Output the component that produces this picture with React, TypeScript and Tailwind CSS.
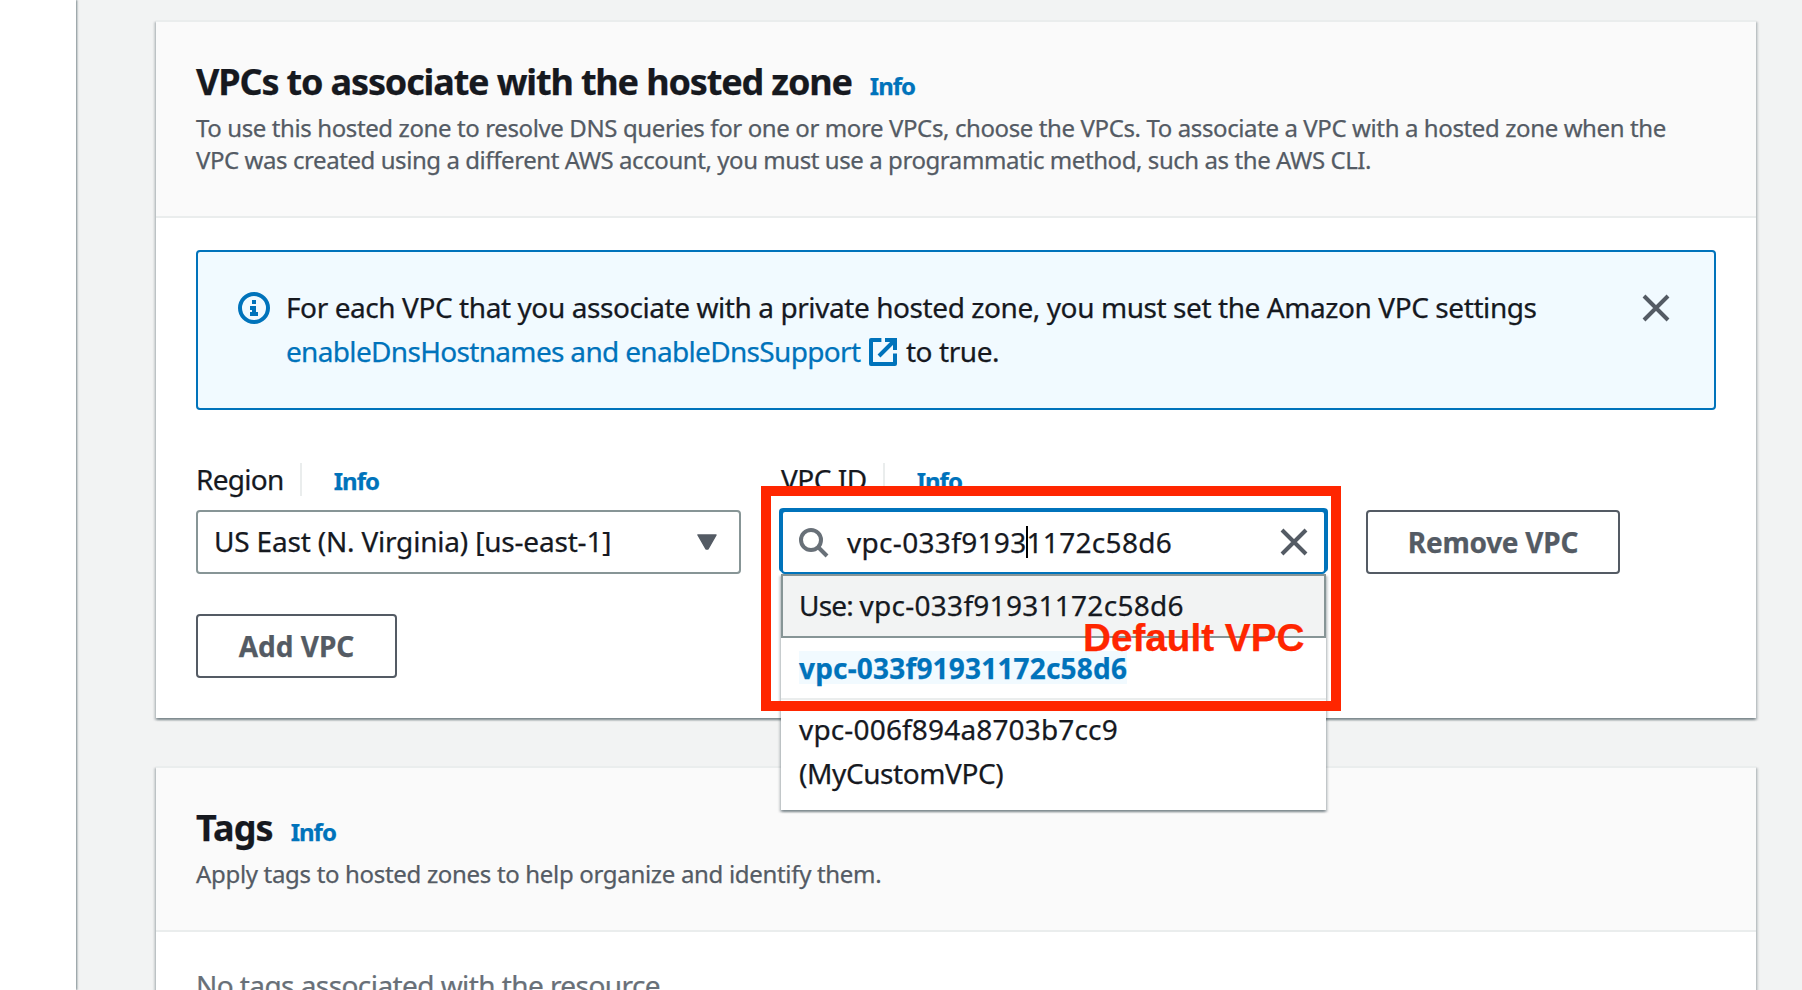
import type { ReactNode } from "react";

function CloseIcon() {
  return (
    <svg viewBox="0 0 32 32" className="block size-8 shrink-0" fill="none" stroke="#545b64" strokeWidth="4">
      <path d="M4 4l24 24M28 4L4 28" />
    </svg>
  );
}

function InfoIcon() {
  return (
    <svg viewBox="0 0 32 32" className="block size-8 shrink-0">
      <circle cx="16" cy="16" r="14" fill="none" stroke="#0073bb" strokeWidth="4" />
      <path d="M14 8h4v4h-4zM12 14h6v6h2v4h-8v-4h2v-2h-2z" fill="#0073bb" />
    </svg>
  );
}

function ExternalIcon() {
  return (
    <svg
      viewBox="0 0 16 16"
      className="mb-1.5 inline-block size-8 align-middle"
      fill="none"
      stroke="#0073bb"
      strokeWidth="2"
    >
      <path d="M14 8.8V14H2V2h5.2" strokeLinejoin="round" />
      <path d="M9 2h5v5M14 2l-8 8" />
    </svg>
  );
}

function SearchIcon() {
  return (
    <svg viewBox="0 0 32 32" className="block size-8 shrink-0" fill="none" stroke="#687078" strokeWidth="4">
      <circle cx="14" cy="14" r="10" />
      <path d="M21 21l9 9" />
    </svg>
  );
}

function InfoLink() {
  return <a className="text-2xl leading-8 font-bold tracking-[-1px] text-[#0073bb]">Info</a>;
}

function Card({ title, description, children }: { title: ReactNode; description: ReactNode; children: ReactNode }) {
  return (
    <section className="border-t-2 border-[#eaeded] bg-white shadow-[0_2px_2px_0_rgba(0,28,36,0.3),2px_2px_2px_0_rgba(0,28,36,0.15),-2px_2px_2px_0_rgba(0,28,36,0.15)]">
      <header className="border-b-2 border-[#eaeded] bg-[#fafafa] px-10 pt-[38px] pb-10">
        <div className="flex h-11 items-baseline gap-[18px]">
          {title}
          <InfoLink />
        </div>
        <p className="mt-2 text-2xl leading-8 whitespace-nowrap text-[#545b64]">{description}</p>
      </header>
      {children}
    </section>
  );
}

function FieldLabel({ children }: { children: ReactNode }) {
  return (
    <div className="mb-[9px] flex h-11 items-baseline">
      <span className="leading-[44px]">{children}</span>
      <span className="mr-8 ml-4 h-[33px] w-0.5 self-center bg-[#eaeded]" />
      <InfoLink />
    </div>
  );
}

function Button({ children, className }: { children: ReactNode; className: string }) {
  return (
    <button
      className={`flex h-16 items-center justify-center rounded-[4px] border-2 border-[#545b64] bg-white font-bold whitespace-nowrap text-[#545b64] ${className}`}
    >
      {children}
    </button>
  );
}

function VpcMenu() {
  return (
    <div className="absolute top-16 left-0 z-10 w-[545px] bg-white leading-[44px] shadow-[0_2px_2px_0_rgba(0,28,36,0.3),2px_2px_2px_0_rgba(0,28,36,0.15),-2px_2px_2px_0_rgba(0,28,36,0.15)]">
      <div className="h-16 border-2 border-[#879596] bg-[#f2f3f3] px-4 pt-[7px]">
        <span className="tracking-[-0.8px]">Use: </span>
        <span className="tracking-[0.28px]">vpc-033f91931172c58d6</span>
      </div>
      <div className="flex h-[62px] items-start border-b-2 border-[#eaeded] px-[18px] pt-[13px]">
        <span className="h-[33px] bg-[#f1faff] leading-[34px] font-bold tracking-[0.18px] text-[#0073bb]">
          vpc-033f91931172c58d6
        </span>
      </div>
      <div className="flex h-[110px] flex-col px-[18px] pt-[7px]">
        <span className="tracking-[0.16px]">vpc-006f894a8703b7cc9</span>
        <span className="tracking-[-0.4px]">(MyCustomVPC)</span>
      </div>
    </div>
  );
}

export default function App() {
  return (
    <div className="flex h-[990px] w-[1802px] overflow-hidden bg-[#f2f3f3] font-['Noto_Sans','Open_Sans',sans-serif] text-[28px] text-[#16191f] [-webkit-text-stroke-width:0.25px]">
      <aside className="w-[76px] shrink-0 bg-white shadow-[1px_0_2px_0_rgba(0,28,36,0.5)]" />
      <main className="ml-20 flex w-[1600px] shrink-0 flex-col gap-12 pt-5">
        <Card
          title={
            <h2 className="text-4xl leading-[44px] font-bold tracking-[-1.15px]">
              VPCs to associate with the hosted zone
            </h2>
          }
          description={
            <>
              <span className="tracking-[-0.39px]">
                To use this hosted zone to resolve DNS queries for one or more VPCs, choose the VPCs. To associate a VPC
                with a hosted zone when the
              </span>
              <br />
              <span className="tracking-[-0.43px]">
                VPC was created using a different AWS account, you must use a programmatic method, such as the AWS CLI.
              </span>
            </>
          }
        >
          <div className="px-10 pt-8 pb-10">
            <div className="flex h-40 items-start rounded-[4px] border-2 border-[#0073bb] bg-[#f1faff] pt-[33px] pr-[42px] pl-10">
              <div className="mt-[7px]">
                <InfoIcon />
              </div>
              <p className="ml-4 flex-1 leading-[44px] tracking-[-0.42px] whitespace-nowrap">
                For each VPC that you associate with a private hosted zone, you must set the Amazon VPC settings
                <br />
                <a className="tracking-[-0.67px] text-[#0073bb]">
                  enableDnsHostnames and enableDnsSupport <ExternalIcon />
                </a>{" "}
                to true.
              </p>
              <div className="mt-[7px]">
                <CloseIcon />
              </div>
            </div>

            <div className="mt-[47px] flex items-end gap-10">
              <div className="w-[545px]">
                <FieldLabel>
                  <span className="tracking-[-0.7px]">Region</span>
                </FieldLabel>
                <div className="flex h-16 items-center justify-between rounded-[4px] border-2 border-[#879596] bg-white pr-[22px] pb-0.5 pl-4">
                  <span className="tracking-[-0.19px]">US East (N. Virginia) [us-east-1]</span>
                  <svg viewBox="0 0 20 16" className="mt-0.5 h-4 w-5" fill="#545b64" stroke="#545b64" strokeLinejoin="round">
                    <path d="M1 1h18l-8 14h-2z" strokeWidth="1.5" />
                  </svg>
                </div>
              </div>

              <div className="w-[545px]">
                <FieldLabel>
                  <span className="tracking-[-0.5px]">VPC ID</span>
                </FieldLabel>
                <div className="relative">
                  <div className="flex h-16 items-center rounded-[4px] border-2 border-[#0073bb] bg-white pr-3.5 pl-3.5 shadow-[2px_-2px_0_0_#0073bb,-2px_-2px_0_0_#0073bb]">
                    <SearchIcon />
                    <span className="ml-[18px] flex flex-1 items-center tracking-[0.32px]">
                      vpc-033f9193
                      <span className="-mr-px -ml-px h-8 w-0.5 bg-black" />
                      1172c58d6
                    </span>
                    <CloseIcon />
                  </div>
                  <VpcMenu />
                  <div className="absolute -top-6 -left-5 z-20 h-[225px] w-[580px] border-10 border-[#ff2600]" />
                  <span className="absolute top-[106px] left-[302px] z-20 font-['Liberation_Sans',Arial,sans-serif] text-[38.7px] leading-[44px] font-bold whitespace-nowrap text-[#ff2600]">
                    Default VPC
                  </span>
                </div>
              </div>

              <Button className="w-[254px] tracking-[-0.25px]">Remove VPC</Button>
            </div>

            <Button className="mt-10 w-[201px]">Add VPC</Button>
          </div>
        </Card>

        <Card
          title={<h2 className="text-4xl leading-[44px] font-bold tracking-[-0.9px]">Tags</h2>}
          description={
            <span className="tracking-[-0.32px]">Apply tags to hosted zones to help organize and identify them.</span>
          }
        >
          <div className="px-10 pt-[31px] pb-10">
            <p className="leading-[44px] tracking-[-0.57px] text-[#687078]">No tags associated with the resource.</p>
          </div>
        </Card>
      </main>
    </div>
  );
}
